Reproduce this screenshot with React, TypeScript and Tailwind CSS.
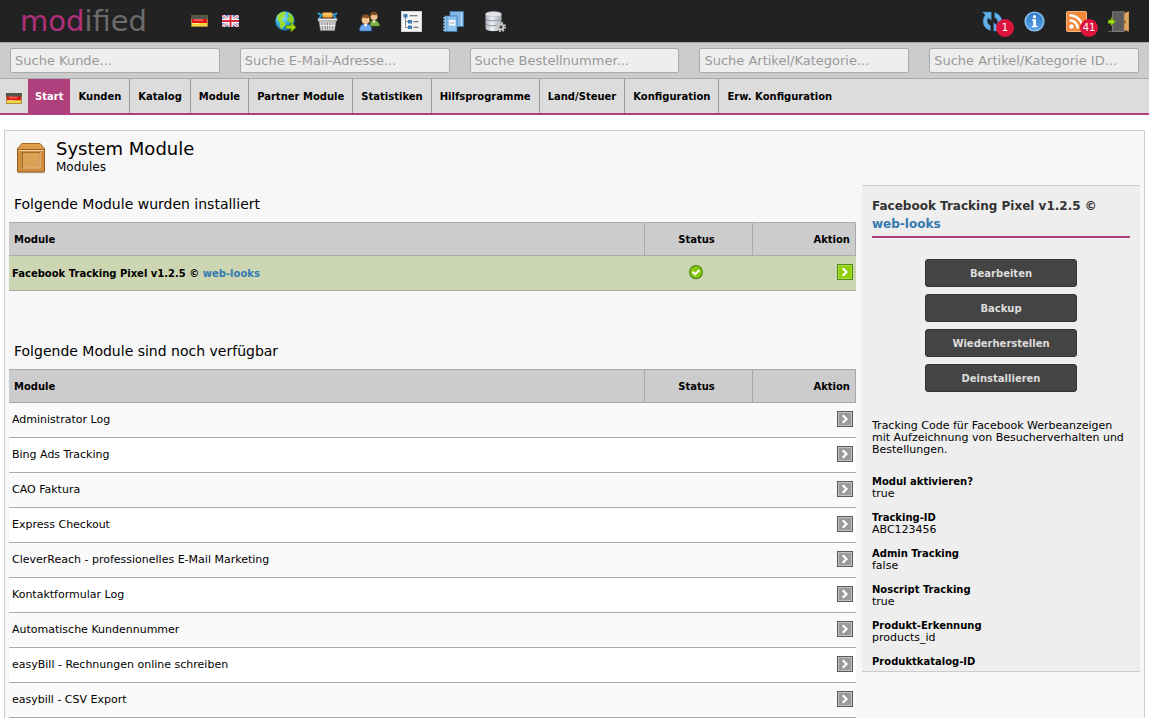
import React from 'react';

const navItems = [
  'Kunden',
  'Katalog',
  'Module',
  'Partner Module',
  'Statistiken',
  'Hilfsprogramme',
  'Land/Steuer',
  'Konfiguration',
  'Erw. Konfiguration',
];

const searchFields = [
  'Suche Kunde...',
  'Suche E-Mail-Adresse...',
  'Suche Bestellnummer...',
  'Suche Artikel/Kategorie...',
  'Suche Artikel/Kategorie ID...',
];

const availableModules = [
  'Administrator Log',
  'Bing Ads Tracking',
  'CAO Faktura',
  'Express Checkout',
  'CleverReach - professionelles E-Mail Marketing',
  'Kontaktformular Log',
  'Automatische Kundennummer',
  'easyBill - Rechnungen online schreiben',
  'easybill - CSV Export',
];

const moduleActions = ['Bearbeiten', 'Backup', 'Wiederherstellen', 'Deinstallieren'];

const moduleSettings = [
  { label: 'Modul aktivieren?', value: 'true' },
  { label: 'Tracking-ID', value: 'ABC123456' },
  { label: 'Admin Tracking', value: 'false' },
  { label: 'Noscript Tracking', value: 'true' },
  { label: 'Produkt-Erkennung', value: 'products_id' },
  { label: 'Produktkatalog-ID', value: '' },
];

function FlagDe({ className }: { className: string }) {
  return (
    <svg viewBox="0 0 17 12" className={className} preserveAspectRatio="none">
      <rect width="17" height="12" fill="#a58a48" />
      <rect width="17" height="4" fill="#5b5640" />
      <rect x="1" y="1" width="15" height="3" fill="#55554f" />
      <rect x="1" y="4" width="15" height="4" fill="#e01717" />
      <rect x="3" y="4" width="9" height="2" fill="#f25a50" />
      <rect x="1" y="8" width="15" height="3" fill="#f6d33b" />
      <rect x="1" y="8" width="7" height="1" fill="#fbe98a" />
    </svg>
  );
}

function FlagUk({ className }: { className: string }) {
  return (
    <svg viewBox="0 0 17 12" className={className} preserveAspectRatio="none">
      <rect width="17" height="12" fill="#4a74c4" />
      <path d="M0 0l17 12M17 0L0 12" stroke="#f2f2f8" strokeWidth="3" />
      <path d="M0 0l17 12M17 0L0 12" stroke="#e0505e" strokeWidth="1" />
      <path d="M8.5 0v12M0 6h17" stroke="#fff" strokeWidth="4.4" />
      <path d="M8.5 0v12M0 6h17" stroke="#dc2a3a" strokeWidth="2" />
    </svg>
  );
}

function GlobeIcon() {
  return (
    <svg viewBox="0 0 21 21" className="size-[21px]">
      <defs>
        <radialGradient id="sea" cx="0.35" cy="0.3" r="0.75">
          <stop offset="0" stopColor="#a6e6ff" />
          <stop offset="0.5" stopColor="#35aee8" />
          <stop offset="1" stopColor="#0d62b0" />
        </radialGradient>
      </defs>
      <circle cx="10" cy="10" r="9.7" fill="url(#sea)" />
      <path d="M2.5 4.5L6 1.5l4-.8 1 1.3-2 2 1 2-2.5 1L7 9.5l3 2 .5 2-2.5 3-1.5 2-2-3.5.5-3L2.5 9z" fill="#9ade35" />
      <path d="M13 1.5l4 2.5 2 4-1 4-2 1-2-2.5-2-1 .5-3 2-1-1.5-2z" fill="#8ad428" />
      <path d="M11 14.5h5v-3.2l5 5-5 4.700v-3.300h-5z" fill="#a5d60a" stroke="#5f8c05" strokeWidth="0.8" />
    </svg>
  );
}

function BasketIcon() {
  return (
    <svg viewBox="0 0 21 21" className="size-[21px]">
      <rect x="5" y="1.5" width="11" height="5" rx="2" fill="#f5a93e" stroke="#c2741b" strokeWidth="0.7" />
      <path d="M6.5 3.200h8" stroke="#ffe09c" strokeWidth="1.2" />
      <path d="M1.500 2.500l3 1.500-2.500 4M19.500 2.500l-3 1.500 2.500 4" fill="none" stroke="#2e9ad6" strokeWidth="2" strokeLinecap="round" />
      <path d="M1 7.5h19V10H1z" fill="#e9e9e9" stroke="#888" strokeWidth="0.6" />
      <path d="M2 10h17l-1.500 9.500h-14z" fill="#d9d9d9" stroke="#8c8c8c" strokeWidth="0.6" />
      <path d="M5 11l.7 7.500M8 11l.3 7.500M10.500 11v7.500M13 11l-.3 7.500M16 11l-.7 7.500" stroke="#8b8b8b" strokeWidth="1" />
      <path d="M3 14.500h15" stroke="#efefef" strokeWidth="1" />
    </svg>
  );
}

function UsersIcon() {
  return (
    <svg viewBox="0 0 21 21" className="size-[21px]">
      <path d="M11 15c0-4 1-5.500 4-5.500s5.500 2 5.500 5.500z" fill="#82b244" stroke="#56802a" strokeWidth="0.6" />
      <path d="M13.500 9.500l1.500 3 1.500-3z" fill="#fff" />
      <circle cx="15" cy="5.500" r="3.600" fill="#eec08c" />
      <path d="M11 6.500C10.500 2 12.500.8 15 .8s4.500 1.500 4 5.700l-1-2.500c-2 .5-4-.5-5 0z" fill="#7a4d1e" />
      <path d="M.6 20c0-5 1.500-7 6-7s6 2 6 7z" fill="#6fa5ea" stroke="#2e66b8" strokeWidth="0.6" />
      <path d="M5 13l1.600 3.500L8.200 13z" fill="#fff" />
      <circle cx="6.700" cy="9" r="4" fill="#f3c795" />
      <path d="M2.400 9.500C2 5 4 3.600 6.700 3.600S11.500 5 11 9.500L9.800 7C8 7.500 5 6.500 3.800 7z" fill="#8a5724" />
    </svg>
  );
}

function TreeIcon() {
  return (
    <svg viewBox="0 0 21 21" className="size-[21px]">
      <rect x="0.5" y="0.5" width="20" height="20" fill="#f4f4f4" stroke="#d2d2d2" />
      <path d="M4.500 6v10.500H8M4.500 10.500H8" fill="none" stroke="#7d8c9c" strokeWidth="1" />
      <rect x="2.500" y="3" width="4" height="3.500" fill="#3d7dba" />
      <rect x="7" y="9" width="4" height="3.500" fill="#3d7dba" />
      <rect x="7" y="14.500" width="4" height="3.500" fill="#3d7dba" />
      <path d="M8.500 4.700h8M12.500 10.700h5M12.500 16.200h5" stroke="#555" strokeWidth="1.1" />
    </svg>
  );
}

function BooksIcon() {
  return (
    <svg viewBox="0 0 21 21" className="size-[21px]">
      <path d="M7 .5h13.500v15H7z" fill="#7fb6e4" stroke="#3f80b8" strokeWidth="0.8" />
      <path d="M18.500 1v14" stroke="#c4e0f5" strokeWidth="1" />
      <path d="M1.500 5H14v15.500H1.500z" fill="#8ec3ee" stroke="#3777ae" strokeWidth="0.8" />
      <path d="M3.800 5.500V20" stroke="#5797cc" strokeWidth="1" />
      <rect x="6" y="9" width="6.500" height="5.500" fill="#f4f8fb" />
      <path d="M7 12h4.500" stroke="#9ab" strokeWidth="1" />
      <path d="M0 7h2.500M0 10h2.500M0 13h2.500M0 16h2.500M0 19h2.500" stroke="#cfe5f6" strokeWidth="1" />
    </svg>
  );
}

function DatabaseIcon() {
  return (
    <svg viewBox="0 0 21 21" className="size-[21px]">
      <defs>
        <linearGradient id="db">
          <stop offset="0" stopColor="#aab0ba" />
          <stop offset="0.4" stopColor="#edf0f4" />
          <stop offset="1" stopColor="#a3a9b4" />
        </linearGradient>
      </defs>
      <path d="M.5 3v14.500c0 3.500 16 3.500 16 0V3z" fill="url(#db)" />
      <ellipse cx="8.500" cy="3.200" rx="8" ry="2.700" fill="#e1e5ea" stroke="#a9afb9" strokeWidth="0.5" />
      <path d="M.5 7.500c0 3 16 3 16 0M.5 12.500c0 3 16 3 16 0" fill="none" stroke="#858c98" strokeWidth="0.9" />
      <circle cx="16" cy="16" r="4.200" fill="none" stroke="#c9c9c9" strokeWidth="1.800" strokeDasharray="1.650 1.650" />
      <circle cx="16" cy="16" r="2.700" fill="#8a8a8a" stroke="#ccc" strokeWidth="1.600" />
      <circle cx="16" cy="16" r="1.200" fill="#444" />
    </svg>
  );
}

function RefreshIcon() {
  return (
    <svg viewBox="0 0 21 21" className="size-[21px]">
      <g fill="#65b1e6" stroke="#2b6da6" strokeWidth="0.6">
        <path d="M.5 1h8.800v8.500L6.500 6.900c-2 2.300-1.600 6 2 7.900v4.700C1 17.500-1 9.500 3.200 3.900z" />
        <path d="M20.500 20h-8.800v-8.500l2.800 2.600c2-2.300 1.600-6-2-7.900V1.500c7.500 2 9.500 10 5.300 15.600z" />
      </g>
    </svg>
  );
}

function InfoIcon() {
  return (
    <svg viewBox="0 0 21 21" className="size-[21px]">
      <defs>
        <linearGradient id="info" x2="0" y2="1">
          <stop offset="0" stopColor="#2f78c4" />
          <stop offset="1" stopColor="#57a5e8" />
        </linearGradient>
      </defs>
      <circle cx="10.500" cy="10.500" r="9.300" fill="url(#info)" stroke="#86bdec" strokeWidth="1.600" />
      <circle cx="10.500" cy="5.700" r="1.600" fill="#fff" />
      <path d="M8 8.300h4v6.500h1.300v1.400H7.800v-1.400h1.400V9.700H8z" fill="#fff" />
    </svg>
  );
}

function RssIcon() {
  return (
    <svg viewBox="0 0 21 21" className="size-[21px]">
      <rect x="0.5" y="0.5" width="20" height="20" rx="1" fill="#f0873a" stroke="#fbb87c" />
      <circle cx="5.500" cy="15.500" r="2.200" fill="#fff" />
      <path d="M3.500 9.300a8.200 8.200 0 0 1 8.200 8.200M3.500 4.300a13.200 13.200 0 0 1 13.200 13.200" fill="none" stroke="#fff" strokeWidth="2.500" />
    </svg>
  );
}

function LogoutIcon() {
  return (
    <svg viewBox="0 0 21 21" className="size-[21px]">
      <path d="M0 20.300h16" stroke="#777" strokeWidth="0.8" />
      <path d="M4.500.8h12v19.500h-12z" fill="#5d5d5d" stroke="#8b8b8b" strokeWidth="0.8" />
      <path d="M16 2.500l5-2.300v20.300l-5-1.500z" fill="#dca765" stroke="#a06d31" strokeWidth="0.6" />
      <path d="M17 9.500v3" stroke="#6a4318" strokeWidth="1" />
      <path d="M0 9h3V6.500l4.500 4.200L3 15v-2.500H0z" fill="#a2dc12" stroke="#4f7f06" strokeWidth="0.8" />
    </svg>
  );
}

function CrateIcon() {
  return (
    <svg viewBox="0 0 28 31" className="h-[31px] w-7">
      <rect x="1" y="28" width="26" height="2.500" rx="1" fill="#cfcfcf" />
      <path d="M5 .5h18l4.500 5v3H.5v-3z" fill="#dd9c4b" stroke="#a5682a" />
      <path d="M.5 6.500h27V29H.5z" fill="#cf8e3f" stroke="#955b20" />
      <path d="M1.500 7.500h25" stroke="#f5d3a0" />
      <rect x="5.500" y="9.500" width="17" height="15.500" fill="#dba155" stroke="#a96a29" />
      <path d="M5.500 25H23V10" fill="none" stroke="#f2cf98" />
    </svg>
  );
}

function CheckIcon() {
  return (
    <svg viewBox="0 0 14 15" className="mx-auto block h-[15px] w-3.5">
      <ellipse cx="7" cy="9" rx="6.500" ry="6" fill="#b3bd9c" />
      <circle cx="7" cy="7" r="6.400" fill="#8ac811" stroke="#4c8f12" strokeWidth="1.200" />
      <path d="M3.700 6.700l2.500 2.600 4.200-4.200" fill="none" stroke="#fff" strokeWidth="2" />
    </svg>
  );
}

function ArrowIcon({ active }: { active?: boolean }) {
  return (
    <svg viewBox="0 0 16 16" className="block size-4">
      <rect x="0.5" y="0.5" width="15" height="15" fill={active ? '#8fce05' : '#9a9a9a'} stroke={active ? '#4d8a16' : '#5a5a5a'} />
      <rect x="1.5" y="1.5" width="13" height="13" fill="none" stroke={active ? '#b5e045' : '#c2c2c2'} />
      <path d="M5.700 4.200L9.500 8l-3.800 3.800" fill="none" stroke="#fff" strokeWidth="2.200" />
    </svg>
  );
}

const shopLinks = [
  { name: 'Shop', icon: <GlobeIcon /> },
  { name: 'Bestellungen', icon: <BasketIcon /> },
  { name: 'Kunden', icon: <UsersIcon /> },
  { name: 'Kategorien', icon: <TreeIcon /> },
  { name: 'Content Manager', icon: <BooksIcon /> },
  { name: 'Datenbank', icon: <DatabaseIcon /> },
];

const systemLinks = [
  { name: 'Updates', icon: <RefreshIcon />, count: 1 },
  { name: 'Info', icon: <InfoIcon /> },
  { name: 'News', icon: <RssIcon />, count: 41 },
  { name: 'Abmelden', icon: <LogoutIcon /> },
];

function TopBar() {
  return (
    <header className="flex h-[43px] items-center border-b border-[#aaa] bg-[#222] px-5">
      <a href="#" className="w-[171px] text-[29px] leading-[42px] text-[#6b6b6b]">
        <span className="text-[#b0307c]">mod</span>ified
      </a>
      <a href="#" aria-label="Deutsch">
        <FlagDe className="h-3 w-[17px]" />
      </a>
      <a href="#" aria-label="English" className="ml-3.5">
        <FlagUk className="h-3 w-[17px]" />
      </a>
      <div className="ml-9 flex gap-[21px]">
        {shopLinks.map((link) => (
          <a key={link.name} href="#" aria-label={link.name}>
            {link.icon}
          </a>
        ))}
      </div>
      <div className="ml-auto flex gap-[21px]">
        {systemLinks.map((link) => (
          <a key={link.name} href="#" aria-label={link.name} className="relative">
            {link.icon}
            {link.count && (
              <span className="absolute top-2 left-3.5 flex size-[18px] items-center justify-center rounded-full bg-[#dc143c] text-[10px] text-white">
                {link.count}
              </span>
            )}
          </a>
        ))}
      </div>
    </header>
  );
}

function SearchBar() {
  return (
    <form className="flex h-9 items-center gap-5 border-b border-[#aaa] bg-[#ccc] px-2.5">
      {searchFields.map((field) => (
        <input
          key={field}
          type="text"
          aria-label={field}
          placeholder={field}
          className="h-[25px] min-w-0 flex-1 rounded-xs border border-[#aaa] bg-[#eee] px-1 text-[13px] placeholder:text-[#999]"
        />
      ))}
    </form>
  );
}

function MainNav() {
  return (
    <nav className="flex h-9 items-stretch border-b-2 border-[#b03f7d] bg-[#dcdcdc] text-[10px] leading-8 font-bold text-black">
      <a href="#" aria-label="Deutsch" className="flex w-7 items-center justify-center pt-1">
        <FlagDe className="h-[11px] w-4" />
      </a>
      <a href="#" className="bg-[#b03f7d] px-[7px] pt-0.5 text-white">
        Start
      </a>
      {navItems.map((item) => (
        <a key={item} href="#" className="border-r border-[#999] px-2 pt-0.5 last:border-r-0">
          {item}
        </a>
      ))}
    </nav>
  );
}

function TableHead() {
  return (
    <thead>
      <tr className="h-[33px] border-y border-[#aaa] bg-[#ccc] text-[10px]">
        <th className="border-r border-[#aaa] px-[5px] text-left">Module</th>
        <th className="w-[108px] border-r border-[#aaa] pr-1">Status</th>
        <th className="w-[103px] border-r border-[#aaa] px-[5px] text-right">Aktion</th>
      </tr>
    </thead>
  );
}

function ModuleDetails() {
  return (
    <aside className="mt-2.5 w-[278px] shrink-0 self-start border-y border-[#ccc] bg-[#eee] px-2.5 pt-[11px]">
      <h2 className="border-b-2 border-[#b03f7d] pb-[3px] text-[12px] leading-[18px] font-bold text-[#333]">
        Facebook Tracking Pixel v1.2.5 ©{' '}
        <a href="#" className="block text-[#337ab0]">
          web-looks
        </a>
      </h2>
      <div className="flex flex-col items-center gap-[7px] pt-[21px] pb-7">
        {moduleActions.map((action) => (
          <button
            key={action}
            type="button"
            className="h-7 w-[152px] rounded-[3px] border border-[#333] bg-[#444] text-[10px] font-bold text-[#ddd]"
          >
            {action}
          </button>
        ))}
      </div>
      <p className="leading-3">
        Tracking Code für Facebook Werbeanzeigen mit Aufzeichnung von Besucherverhalten und Bestellungen.
      </p>
      <dl className="mt-5 flex flex-col gap-3 pb-[3px] leading-3">
        {moduleSettings.map((setting) => (
          <div key={setting.label}>
            <dt className="text-[10px] leading-3 font-bold">{setting.label}</dt>
            {setting.value && <dd>{setting.value}</dd>}
          </div>
        ))}
      </dl>
    </aside>
  );
}

export default function App() {
  return (
    <div className="flex min-h-screen flex-col bg-white font-['Verdana','DejaVu_Sans',sans-serif] text-[11px] text-black">
      <TopBar />
      <SearchBar />
      <MainNav />

      <main className="mx-1 mt-[15px] flex-1 border border-b-0 border-[#ccc] bg-[#f7f7f7] px-1">
        <div className="flex gap-[11px] pt-2 pl-2">
          <div className="pt-1">
            <CrateIcon />
          </div>
          <div>
            <h1 className="text-[18px] leading-5">System Module</h1>
            <p className="text-[12px] leading-4">Modules</p>
          </div>
        </div>

        <div className="flex gap-1.5">
          <div className="min-w-0 flex-1">
            <h2 className="pt-5 pb-[9px] pl-[5px] text-[14px] leading-[18px]">Folgende Module wurden installiert</h2>
            <table className="w-full border-collapse">
              <TableHead />
              <tbody>
                <tr className="h-[35px] border-b border-[#aaa] bg-[#cdd6b3]">
                  <td className="px-[3px] text-[10px] font-bold">
                    Facebook Tracking Pixel v1.2.5 ©{' '}
                    <a href="#" className="text-[#337ab0]">
                      web-looks
                    </a>
                  </td>
                  <td className="pr-1.5 pb-0.5">
                    <CheckIcon />
                  </td>
                  <td className="px-[3px] pb-0.5">
                    <a href="#" aria-label="Bearbeiten" className="flex justify-end">
                      <ArrowIcon active />
                    </a>
                  </td>
                </tr>
              </tbody>
            </table>

            <h2 className="pt-[51px] pb-[9px] pl-[5px] text-[14px] leading-[18px]">
              Folgende Module sind noch verfügbar
            </h2>
            <table className="w-full border-collapse">
              <TableHead />
              <tbody>
                {availableModules.map((name) => (
                  <tr key={name} className="h-[35px] border-b border-[#aaa] bg-white odd:bg-[#fafafa]">
                    <td className="px-[3px]">{name}</td>
                    <td />
                    <td className="px-[3px] pb-0.5">
                      <a href="#" aria-label={name} className="flex justify-end">
                        <ArrowIcon />
                      </a>
                    </td>
                  </tr>
                ))}
              </tbody>
            </table>
          </div>
          <ModuleDetails />
        </div>
      </main>
    </div>
  );
}
